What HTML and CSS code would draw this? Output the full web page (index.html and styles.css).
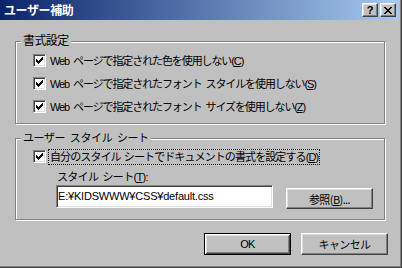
FILE: index.html
```html
<!DOCTYPE html>
<html lang="ja">
<head>
  <meta charset="UTF-8">
  <title>ユーザー補助</title>
  <link rel="stylesheet" href="styles.css">
</head>
<body>
  <div class="window">
    <div class="titlebar">
      <span class="title">ユーザー補助</span>
      <div class="caption-btns">
        <span class="cbtn help">?</span>
        <span class="cbtn close">
          <svg width="8" height="7" viewBox="0 0 8 7" shape-rendering="crispEdges"><path d="M0 0h2v1H0zM6 0h2v1H6zM1 1h2v1H1zM5 1h2v1H5zM2 2h4v1H2zM3 3h2v1H3zM2 4h4v1H2zM1 5h2v1H1zM5 5h2v1H5zM0 6h2v1H0zM6 6h2v1H6z" fill="#000"/></svg>
        </span>
      </div>
    </div>
    <div class="content">
      <fieldset class="group group-format">
        <legend>書式設定</legend>
        <div class="row"><span class="check"><svg width="7" height="7" shape-rendering="crispEdges"><path d="M0 2h1v3H0zM1 3h1v3H1zM2 4h1v3H2zM3 3h1v3H3zM4 2h1v3H4zM5 1h1v3H5zM6 0h1v3H6z"/></svg></span><span class="label">Web ページで指定された色を使用しない(<u>C</u>)</span></div>
        <div class="row"><span class="check"><svg width="7" height="7" shape-rendering="crispEdges"><path d="M0 2h1v3H0zM1 3h1v3H1zM2 4h1v3H2zM3 3h1v3H3zM4 2h1v3H4zM5 1h1v3H5zM6 0h1v3H6z"/></svg></span><span class="label">Web ページで指定されたフォント スタイルを使用しない(<u>S</u>)</span></div>
        <div class="row"><span class="check"><svg width="7" height="7" shape-rendering="crispEdges"><path d="M0 2h1v3H0zM1 3h1v3H1zM2 4h1v3H2zM3 3h1v3H3zM4 2h1v3H4zM5 1h1v3H5zM6 0h1v3H6z"/></svg></span><span class="label">Web ページで指定されたフォント サイズを使用しない(<u>Z</u>)</span></div>
      </fieldset>
      <fieldset class="group group-sheet">
        <legend>ユーザー スタイル シート</legend>
        <div class="row"><span class="check"><svg width="7" height="7" shape-rendering="crispEdges"><path d="M0 2h1v3H0zM1 3h1v3H1zM2 4h1v3H2zM3 3h1v3H3zM4 2h1v3H4zM5 1h1v3H5zM6 0h1v3H6z"/></svg></span><span class="label focus">自分のスタイル シートでドキュメントの書式を設定する(<u>D</u>)</span></div>
        <div class="sheet">
          <div class="sheet-label">スタイル シート(<u>T</u>):</div>
          <div class="sheet-row">
            <div class="edit">E:¥KIDSWWW¥CSS¥default.css</div>
            <span class="btn browse">参照(<u>B</u>)...</span>
          </div>
        </div>
      </fieldset>
      <div class="actions">
        <span class="btn default">OK</span>
        <span class="btn">キャンセル</span>
      </div>
    </div>
  </div>
</body>
</html>
```

FILE: styles.css
```css
/* Window */
body {
  margin: 0;
  background: #c0c0c0;
  font-family: "Liberation Sans", "Noto Sans CJK JP", sans-serif;
  font-size: 11px;
  color: #000;
}
.window {
  box-sizing: border-box;
  width: 402px;
  height: 268px;
  background: #c0c0c0;
  border-right: 1px solid #404040;
  border-bottom: 1px solid #404040;
  box-shadow: inset -1px -1px 0 #808080;
  padding: 0 2px 2px 0;
}
/* Title bar */
.titlebar {
  height: 20px;
  display: flex;
  align-items: center;
  justify-content: space-between;
  background: linear-gradient(to right, #0a246a, #a6caf0);
  padding: 0 3px 0 4px;
}
.title {
  color: #fff;
  font-weight: bold;
  font-size: 12px;
  line-height: 14px;
  letter-spacing: -0.4px;
  font-family: "Noto Sans CJK JP", sans-serif;
}
.caption-btns { display: flex; gap: 2px; }
.cbtn {
  box-sizing: border-box;
  width: 16px;
  height: 14px;
  background: #c0c0c0;
  border-top: 1px solid #fff;
  border-left: 1px solid #fff;
  border-right: 1px solid #404040;
  border-bottom: 1px solid #404040;
  box-shadow: inset -1px -1px 0 #808080, inset 1px 1px 0 #dfdfdf;
  display: flex;
  align-items: center;
  justify-content: center;
  font-weight: bold;
  font-size: 11px;
  line-height: 11px;
}
/* Content */
.content { padding: 14px 13px 0 15px; }
.group {
  margin: 0;
  padding: 0;
  width: 370px;
  box-sizing: border-box;
  border: 1px solid #808080;
  box-shadow: inset 1px 1px 0 #fff, 1px 1px 0 #fff;
}
.group legend {
  margin-left: 5px;
  padding: 0 2px;
  background: #c0c0c0;
  line-height: 14px;
  font-size: 12px;
  letter-spacing: -0.6px;
}
.group-sheet legend { font-size: 11px; letter-spacing: -0.4px; word-spacing: 2px; }
.group-format { height: 90px; padding-top: 1px; }
.group-sheet { margin-top: 7px; height: 89px; }
.row {
  height: 23px;
  display: flex;
  align-items: center;
  padding-left: 17px;
}
.label { margin-left: 4px; line-height: 14px; letter-spacing: -1.1px; word-spacing: 2px; }
.label.focus { outline: 1px dotted #000; outline-offset: 0; padding: 0 1px; margin-left: 3px; letter-spacing: -0.9px; word-spacing: 1px; }
/* Checkbox */
.check {
  box-sizing: border-box;
  width: 13px;
  height: 13px;
  flex: none;
  background: #fff;
  border-top: 1px solid #808080;
  border-left: 1px solid #808080;
  border-right: 1px solid #fff;
  border-bottom: 1px solid #fff;
  box-shadow: inset 1px 1px 0 #404040, inset -1px -1px 0 #dfdfdf;
  padding: 2px 0 0 2px;
}
.check svg { display: block; }
/* Style sheet path */
.sheet { padding-left: 40px; }
.sheet-label { margin-top: 2px; line-height: 14px; padding-left: 1px; letter-spacing: -0.7px; word-spacing: 2px; }
.sheet-row { display: flex; align-items: flex-start; margin-top: 1px; }
.edit {
  box-sizing: border-box;
  width: 217px;
  height: 23px;
  background: #fff;
  border-top: 1px solid #808080;
  border-left: 1px solid #808080;
  border-right: 1px solid #fff;
  border-bottom: 1px solid #fff;
  box-shadow: inset 1px 1px 0 #404040, inset -1px -1px 0 #dfdfdf;
  padding: 3px 1px;
  line-height: 15px;
  letter-spacing: -0.2px;
}
/* Buttons */
.btn {
  box-sizing: border-box;
  width: 87px;
  height: 22px;
  display: flex;
  align-items: center;
  justify-content: center;
  background: #c0c0c0;
  border-top: 1px solid #fff;
  border-left: 1px solid #fff;
  border-right: 1px solid #404040;
  border-bottom: 1px solid #404040;
  box-shadow: inset -1px -1px 0 #808080, inset 1px 1px 0 #dfdfdf;
  font-family: "Noto Sans CJK JP", sans-serif;
  letter-spacing: -0.6px;
}
.btn.browse { margin: 3px 0 0 13px; height: 21px; }
.btn.default {
  border: 1px solid #000;
  box-shadow: inset 1px 1px 0 #fff, inset -1px -1px 0 #404040, inset 2px 2px 0 #dfdfdf, inset -2px -2px 0 #808080;
  font-family: "Liberation Sans", sans-serif;
}
.actions {
  display: flex;
  justify-content: flex-end;
  gap: 10px;
  margin: 13px -2px 0 0;
}
```
